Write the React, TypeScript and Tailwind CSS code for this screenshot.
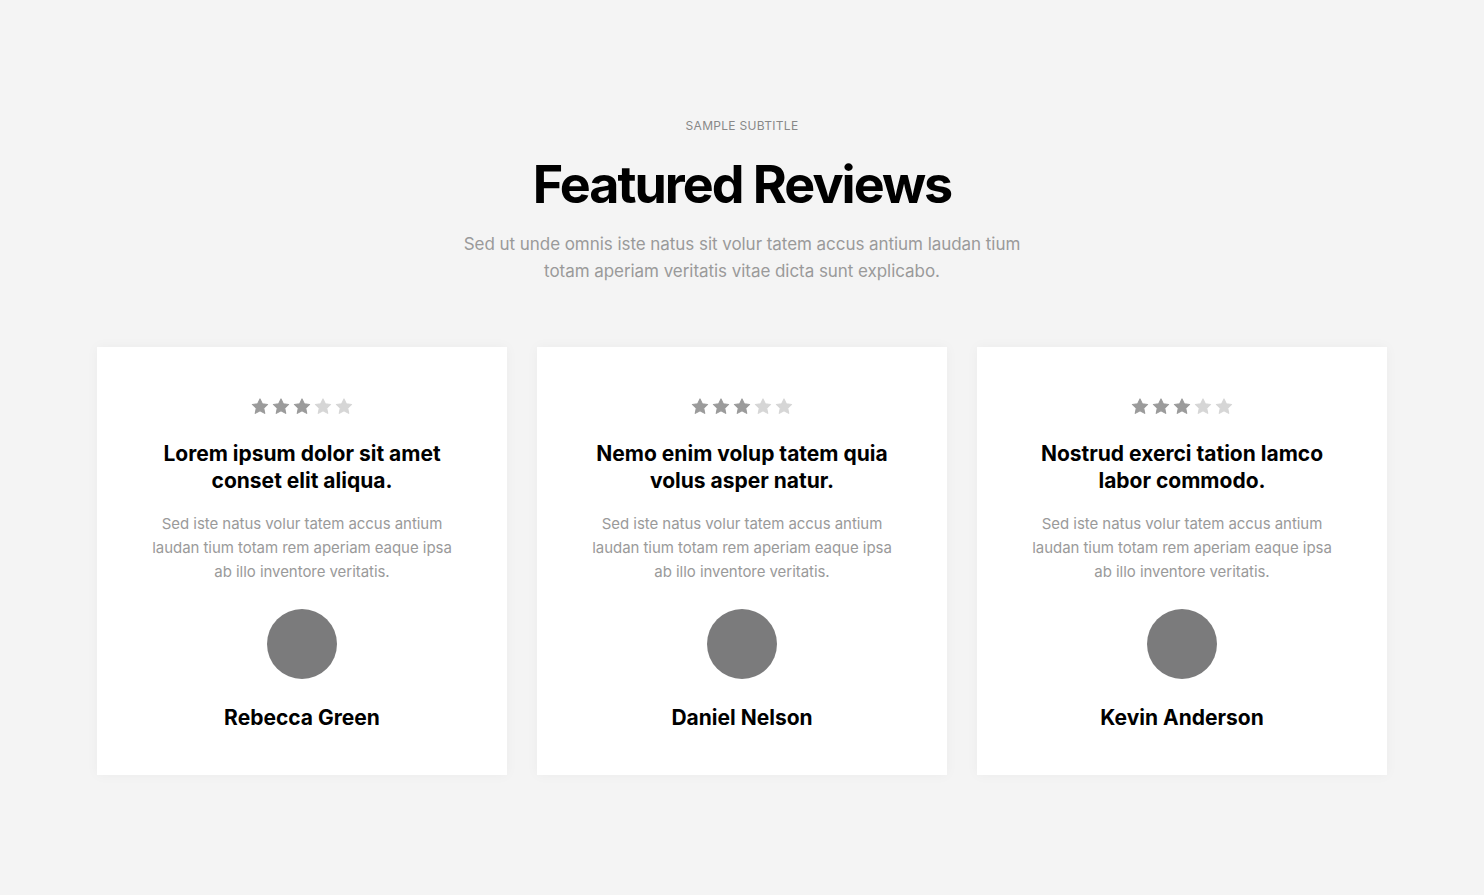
import React from "react";

const reviews = [
  { title: ["Lorem ipsum dolor sit amet", "conset elit aliqua."], name: "Rebecca Green" },
  { title: ["Nemo enim volup tatem quia", "volus asper natur."], name: "Daniel Nelson" },
  { title: ["Nostrud exerci tation lamco", "labor commodo."], name: "Kevin Anderson" },
];

function Star({ filled }: { filled: boolean }) {
  return (
    <svg width="18" height="17" viewBox="0 0 24 23" className="block">
      <path
        d="M12 1.2l3.1 6.6 7.2.9-5.3 5 1.4 7.1L12 17.3 5.6 20.8 7 13.7 1.7 8.7l7.2-.9z"
        fill={filled ? "#9b9b9b" : "#d6d6d6"}
        stroke={filled ? "#9b9b9b" : "#d6d6d6"}
        strokeWidth="1.5"
        strokeLinejoin="round"
      />
    </svg>
  );
}

export default function App() {
  return (
    <div
      className="min-h-[895px] w-full bg-[#f4f4f4] flex flex-col items-center"
      style={{ fontFamily: "Inter, 'Noto Sans', sans-serif" }}
    >
      <div className="pt-[119px] flex flex-col items-center text-center">
        <div className="text-[12px] leading-[14px] uppercase text-[#888888] tracking-[0.3px]">Sample subtitle</div>
        <h1 className="mt-[22px] text-[52px] leading-[60px] font-bold text-black tracking-[-2px]">Featured Reviews</h1>
        <p className="mt-[16px] w-[590px] text-[17px] leading-[27px] text-[#9a9a9a] tracking-[-0.05px]">
          Sed ut unde omnis iste natus sit volur tatem accus antium laudan tium totam aperiam veritatis vitae dicta sunt explicabo.
        </p>
      </div>
      <div className="mt-[62px] grid grid-cols-3 gap-[30px] w-[1290px]">
        {reviews.map((r) => (
          <div
            key={r.name}
            className="bg-white h-[428px] flex flex-col items-center pt-[51px] shadow-[0_0_12px_rgba(0,0,0,0.04)]"
          >
            <div className="flex gap-[3px]">
              {[0, 1, 2, 3, 4].map((i) => (
                <Star key={i} filled={i < 3} />
              ))}
            </div>
            <h3 className="mt-[25px] text-[21px] leading-[27px] font-bold text-black text-center tracking-[0px]">
              {r.title[0]}
              <br />
              {r.title[1]}
            </h3>
            <p className="mt-[18px] w-[320px] text-[15px] leading-[24px] text-[#9a9a9a] text-center tracking-[-0.05px]">
              Sed iste natus volur tatem accus antium laudan tium totam rem aperiam eaque ipsa ab illo inventore veritatis.
            </p>
            <div className="mt-[25px] w-[70px] h-[70px] rounded-full bg-[#7b7b7c]" />
            <div className="mt-[25px] text-[21px] leading-[27px] font-bold text-black tracking-[0px]">{r.name}</div>
          </div>
        ))}
      </div>
    </div>
  );
}
